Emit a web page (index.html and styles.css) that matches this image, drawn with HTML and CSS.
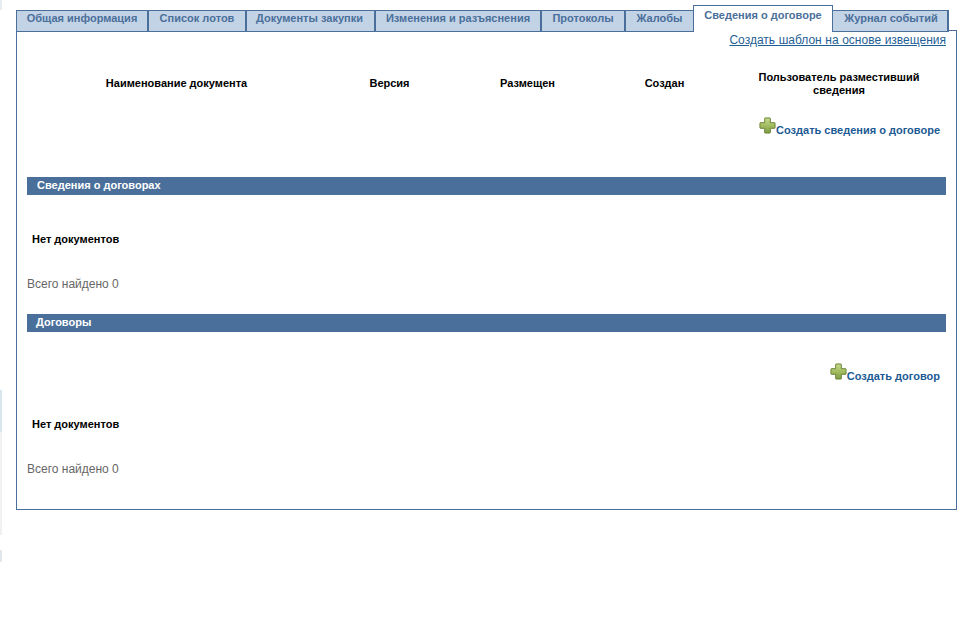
FILE: index.html
```html
<!DOCTYPE html>
<html>
<head>
  <title>Сведения о договоре</title>
  <link rel="stylesheet" href="styles.css">
</head>
<body>
  <div class="tabs">
    <a class="tab tab-w1">Общая информация</a>
    <a class="tab tab-w2">Список лотов</a>
    <a class="tab tab-w3">Документы закупки</a>
    <a class="tab tab-w4">Изменения и разъяснения</a>
    <a class="tab tab-w5">Протоколы</a>
    <a class="tab tab-w6">Жалобы</a>
    <a class="tab tab-active">Сведения о договоре</a>
    <a class="tab tab-w8">Журнал событий</a>
  </div>

  <div class="panel">
    <div class="template-row">
      <a class="template-link">Создать шаблон на основе извещения</a>
    </div>

    <div class="doc-head">
      <div>Наименование документа</div>
      <div>Версия</div>
      <div>Размещен</div>
      <div>Создан</div>
      <div>Пользователь разместивший сведения</div>
    </div>

    <div class="create-row create-row-first">
      <a class="create-link">
        <svg class="plus" width="17" height="17" viewBox="0 0 18 18">
          <use href="#plus-icon"></use>
        </svg>Создать сведения о договоре
      </a>
    </div>

    <div class="section-bar section-bar-first">Сведения о договорах</div>
    <div class="no-docs no-docs-first">Нет документов</div>
    <div class="total">Всего найдено 0</div>

    <div class="section-bar section-bar-second">Договоры</div>
    <div class="create-row create-row-second">
      <a class="create-link">
        <svg class="plus" width="17" height="17" viewBox="0 0 18 18">
          <use href="#plus-icon"></use>
        </svg>Создать договор
      </a>
    </div>
    <div class="no-docs no-docs-second">Нет документов</div>
    <div class="total">Всего найдено 0</div>
  </div>

  <svg class="icon-defs" width="0" height="0">
    <defs>
      <linearGradient id="plus-fill" x1="0" y1="0" x2="0" y2="1">
        <stop offset="0" stop-color="#c6d992"></stop>
        <stop offset="0.5" stop-color="#a3bd62"></stop>
        <stop offset="1" stop-color="#7f9c46"></stop>
      </linearGradient>
      <symbol id="plus-icon" viewBox="0 0 18 18">
        <path d="M6 1.5 Q6 1 6.5 1 H11.5 Q12 1 12 1.5 V6 H16.5 Q17 6 17 6.5 V11.5 Q17 12 16.5 12 H12 V16.5 Q12 17 11.5 17 H6.5 Q6 17 6 16.5 V12 H1.5 Q1 12 1 11.5 V6.5 Q1 6 1.5 6 H6 Z" fill="url(#plus-fill)" stroke="#66802f" stroke-width="1"></path>
      </symbol>
    </defs>
  </svg>
</body>
</html>
```

FILE: styles.css
```css
html {
  height: 100%;
  background-color: #fff;
  background-image:
    linear-gradient(#e6edf1, #e6edf1),
    linear-gradient(#d8e5ec, #d8e5ec),
    linear-gradient(#f1f1f1, #f1f1f1),
    linear-gradient(#e0e8ee, #e0e8ee);
  background-size: 2px 10px, 2px 42px, 2px 103px, 2px 12px;
  background-position: 0 0, 0 390px, 0 432px, 0 550px;
  background-repeat: no-repeat;
}

body {
  font-family: "Liberation Sans", Arial, sans-serif;
  margin: 0;
  padding: 5px 6px 0 16px;
}

.tabs {
  display: flex;
  align-items: flex-end;
  height: 26px;
  position: relative;
  z-index: 1;
}

.tab {
  box-sizing: border-box;
  height: 22px;
  margin-bottom: -1px;
  border: 1px solid #4a6f9a;
  border-left-width: 2px;
  border-right: none;
  background-color: #c3d3e6;
  color: #4a6f9a;
  font-size: 11px;
  font-weight: bold;
  line-height: 14px;
  text-align: center;
  white-space: nowrap;
}

.tab-w1 { width: 131px; border-left-width: 1px; }
.tab-w2 { width: 98px; }
.tab-w3 { width: 129px; padding-right: 2px; }
.tab-w4 { width: 166px; }
.tab-w5 { width: 84px; }
.tab-w6 { width: 69px; }

.tab-active {
  width: 140px;
  height: 27px;
  border-left-width: 1px;
  border-right: 1px solid #4a6f9a;
  border-bottom: none;
  background-color: #fff;
  line-height: 19px;
}

.tab-w8 {
  width: 116px;
  padding-left: 2px;
  border-left: none;
  border-right: 2px solid #4a6f9a;
}

.panel {
  box-sizing: border-box;
  height: 480px;
  margin-top: -1px;
  padding: 0 10px;
  border: 1px solid #4a6f9a;
}

.template-row {
  text-align: right;
  padding-top: 2px;
  font-size: 12px;
  line-height: 14px;
}

.template-link {
  color: #1f5f96;
  word-spacing: 0.25px;
  text-decoration: underline;
}

.doc-head {
  display: grid;
  grid-template-columns: 299px 127px 149px 125px 222px;
  align-items: center;
  margin-top: 22px;
  width: 922px;
  color: #000;
  font-size: 11px;
  font-weight: bold;
  line-height: 13px;
  text-align: center;
}

.doc-head div:last-child {
  padding: 2px 19px 0 21px;
}

.create-row {
  text-align: right;
  padding-right: 6px;
  font-size: 11px;
  line-height: 13px;
}

.create-row-first {
  margin-top: 20px;
  height: 27px;
}

.create-row-second {
  margin-top: 31px;
  height: 27px;
}

.create-link {
  color: #1c5a94;
  font-weight: bold;
}

.plus {
  vertical-align: 0;
}

.section-bar {
  height: 18px;
  background-color: #4a6f9a;
  color: #fff;
  font-size: 11px;
  font-weight: bold;
  line-height: 16px;
  padding-left: 10px;
}

.section-bar-first {
  margin-top: 33px;
}

.section-bar-second {
  margin-top: 23px;
  padding-left: 9px;
}

.no-docs {
  color: #000;
  font-size: 11px;
  font-weight: bold;
  line-height: 13px;
  padding-left: 5px;
}

.no-docs-first {
  margin-top: 38px;
}

.no-docs-second {
  margin-top: 28px;
}

.total {
  margin-top: 31px;
  color: #666;
  font-size: 12px;
  line-height: 14px;
}

.icon-defs {
  position: absolute;
}
```
